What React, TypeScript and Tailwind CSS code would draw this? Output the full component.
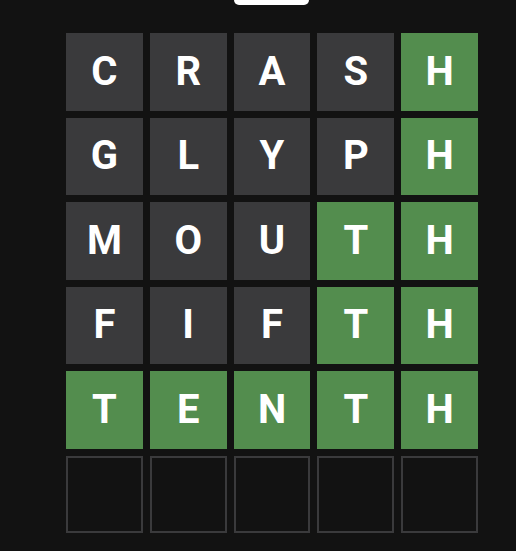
const rows: { letters: string; states: string }[] = [
  { letters: "CRASH", states: "aaaac" },
  { letters: "GLYPH", states: "aaaac" },
  { letters: "MOUTH", states: "aaacc" },
  { letters: "FIFTH", states: "aaacc" },
  { letters: "TENTH", states: "ccccc" },
  { letters: "     ", states: "eeeee" },
];

function Tile({ letter, state }: { letter: string; state: string }) {
  if (state === "e") {
    return <div className="border-2 border-[#3a3a3c] bg-[#121212]" />;
  }
  return (
    <div
      className={
        (state === "c" ? "bg-[#538d4e]" : "bg-[#3a3a3c]") +
        " flex items-center justify-center text-[40px] font-bold text-white leading-none"
      }
    >
      {letter}
    </div>
  );
}

export default function App() {
  return (
    <div
      className="w-[516px] h-[551px] bg-[#121212] overflow-hidden"
      style={{ fontFamily: "Roboto, 'Liberation Sans', sans-serif" }}
    >
      <div className="ml-[66px] w-[412px] flex flex-col items-center">
        {/* toast peeking from the top */}
        <div className="w-[75px] h-[5px] bg-white rounded-b-[5px] -ml-px" />
        <div className="mt-[28px] w-[412px] h-[500px] grid grid-cols-5 grid-rows-6 gap-[7px]">
          {rows.map((row, r) =>
            row.letters
              .split("")
              .map((ch, c) => <Tile key={r + "-" + c} letter={ch} state={row.states[c]} />)
          )}
        </div>
      </div>
    </div>
  );
}
